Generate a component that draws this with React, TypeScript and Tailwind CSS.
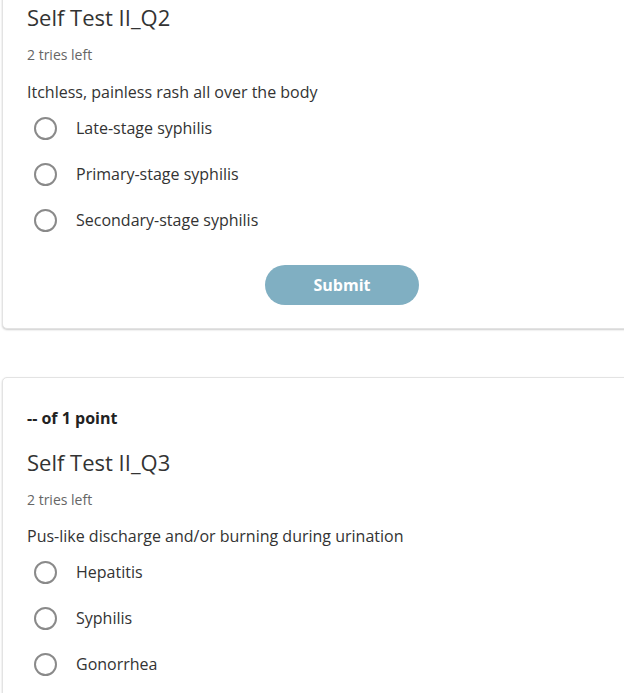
import React from "react";

const font = { fontFamily: '"Open Sans", "Noto Sans", sans-serif' };

function Option({ label }: { label: string }) {
  return (
    <div className="flex items-center h-[46px] pl-[7px]">
      <span className="w-[23px] h-[23px] rounded-full border-2 border-[#8a8a8a] bg-white shrink-0" />
      <span className="ml-[19px] text-[16px] leading-[24px] text-[#333]">{label}</span>
    </div>
  );
}

export default function App() {
  return (
    <div className="w-[624px] h-[693px] overflow-hidden bg-white" style={font}>
      <div className="pl-[2px]">
        <div className="w-[680px] -mt-[23px] pt-[23px] pb-[23px] pl-[24px] border border-[#e3e3e3] rounded-[5px] shadow-[0_1px_2px_rgba(0,0,0,0.2)] bg-white">
          <div className="text-[22px] leading-[32px] text-[#333]">Self Test II_Q2</div>
          <div className="mt-[12px] text-[14px] leading-[20px] text-[#666]">2 tries left</div>
          <div className="mt-[15px] text-[16px] leading-[24px] text-[#333]">Itchless, painless rash all over the body</div>
          <div className="mt-[1px]">
            <Option label="Late-stage syphilis" />
            <Option label="Primary-stage syphilis" />
            <Option label="Secondary-stage syphilis" />
          </div>
          <div className="mt-[22px]">
            <button className="ml-[238px] w-[154px] h-[40px] rounded-full bg-[#80afc2] text-white text-[16px] font-bold">
              Submit
            </button>
          </div>
        </div>
        <div className="mt-[48px] w-[680px] pt-[28px] pb-[40px] pl-[24px] border border-[#e3e3e3] rounded-[5px] shadow-[0_1px_2px_rgba(0,0,0,0.2)] bg-white">
          <div className="text-[16px] leading-[24px] font-bold text-[#222]">-- of 1 point</div>
          <div className="mt-[16px] text-[22px] leading-[32px] text-[#333]">Self Test II_Q3</div>
          <div className="mt-[12px] text-[14px] leading-[20px] text-[#666]">2 tries left</div>
          <div className="mt-[14px] text-[16px] leading-[24px] text-[#333]">Pus-like discharge and/or burning during urination</div>
          <div className="mt-[1px]">
            <Option label="Hepatitis" />
            <Option label="Syphilis" />
            <Option label="Gonorrhea" />
          </div>
        </div>
      </div>
    </div>
  );
}
